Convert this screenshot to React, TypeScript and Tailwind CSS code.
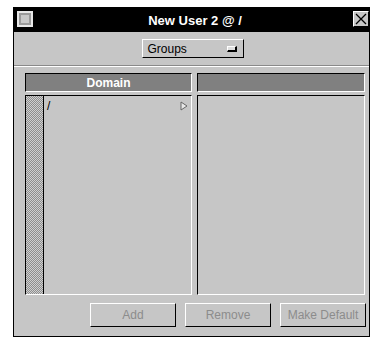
import React from 'react';

const sunken = 'border-t border-l border-t-black border-l-black border-b border-r border-b-white border-r-white';
const raised = 'border-t border-l border-t-white border-l-white border-b border-r border-b-black border-r-black';

function ActionButton({ label }: { label: string }) {
  return (
    <button
      disabled
      className={`w-[86px] h-[24px] ${raised} bg-[#c6c6c6] text-[12px] text-[#8c8c8c] flex items-center justify-center`}
    >
      {label}
    </button>
  );
}

export default function App() {
  return (
    <div
      className="w-[382px] h-[346px] bg-white pt-[7px] pl-[13px]"
      style={{ fontFamily: '"Liberation Sans", Arial, sans-serif' }}
    >
      <div className="w-[357px] h-[330px] border border-black bg-[#c6c6c6] flex flex-col">
        {/* title bar */}
        <div className="h-[24px] bg-black relative flex items-center">
          <div className="absolute left-[3px] top-[3px] w-[16px] h-[16px] border-2 border-[#e8e8e8] bg-[#9a9a9a] p-[2px]">
            <div className="w-full h-full bg-[#c8c8c8]" />
          </div>
          <div className="flex-1 pl-[7px] text-center text-white font-bold text-[13px] leading-none">New User 2 @ /</div>
          <div className={`absolute right-[0px] top-[3px] w-[16px] h-[16px] bg-[#c6c6c6] ${raised} flex items-center justify-center`}>
            <svg width="12" height="12" viewBox="0 0 12 12">
              <path d="M1 1 L11 11 M11 1 L1 11" stroke="#000" strokeWidth="1.3" />
            </svg>
          </div>
        </div>

        {/* groups popup */}
        <div className="mt-[7px] flex justify-center">
          <div className={`ml-[2px] w-[102px] h-[19px] ${raised} bg-[#c6c6c6] flex items-center justify-between pl-[5px] pr-[6px]`}>
            <span className="text-[12px] text-black">Groups</span>
            <div className="w-[10px] h-[6px] bg-[#e0e0e0] border-t border-l border-t-white border-l-white border-b-2 border-r-2 border-b-black border-r-black" />
          </div>
        </div>

        {/* separator */}
        <div className="mt-[7px] h-[2px] border-t border-t-[#8a8a8a] border-b border-b-white" />

        {/* columns */}
        <div className="mt-[6px] pl-[11px] pr-[3px] flex gap-[5px]">
          <div className="w-[167px] flex flex-col gap-[3px]">
            <div className={`h-[19px] ${sunken} bg-[#808080] flex items-center justify-center text-white font-bold text-[12px]`}>
              Domain
            </div>
            <div className={`h-[200px] ${sunken} bg-[#c6c6c6] flex`}>
              <div className="w-[18px] h-full border-r border-r-black bg-[image:repeating-conic-gradient(#8e8e8e_0_25%,#d0d0d0_0_50%)] bg-[length:2px_2px]" />
              <div className="flex-1 flex items-start justify-between pl-[3px] pr-[3px] pt-[3px]">
                <span className="text-[12px] leading-[14px] text-black">/</span>
                <svg width="8" height="10" viewBox="0 0 8 10" className="mt-[2px]">
                  <path d="M1 1 L7 5 L1 9 Z" fill="#e8e8e8" stroke="#666" strokeWidth="1" />
                </svg>
              </div>
            </div>
          </div>
          <div className="w-[168px] flex flex-col gap-[3px]">
            <div className={`h-[19px] ${sunken} bg-[#808080]`} />
            <div className={`h-[200px] ${sunken} bg-[#c6c6c6]`} />
          </div>
        </div>

        {/* buttons */}
        <div className="mt-[8px] pr-[3px] flex justify-end gap-[9px]">
          <ActionButton label="Add" />
          <ActionButton label="Remove" />
          <ActionButton label="Make Default" />
        </div>
      </div>
    </div>
  );
}
